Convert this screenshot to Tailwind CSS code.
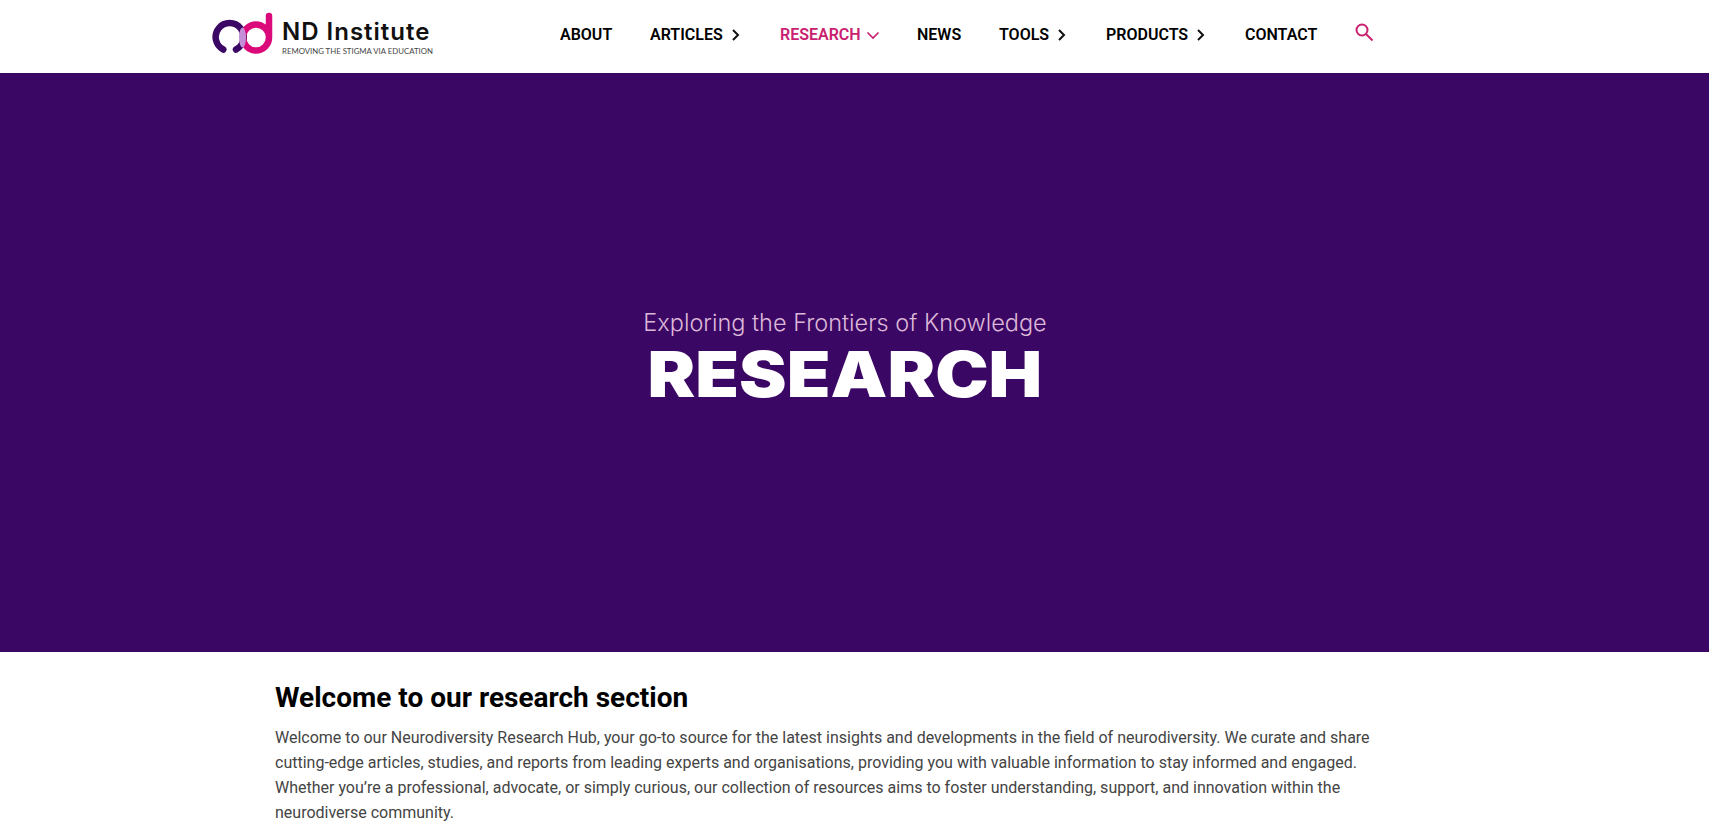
<!DOCTYPE html>
<html lang="en">
<head>
<meta charset="utf-8">
<script src="https://cdn.jsdelivr.net/npm/@tailwindcss/browser@4"></script>
<title>Research</title>
</head>
<body class="bg-white font-['Roboto',sans-serif] overflow-hidden h-[839px]">
<header class="h-[73px] bg-white flex items-center pl-[212px]">
  <a class="flex items-center w-[220px] shrink-0">
    <svg class="w-[62px] h-[50px] shrink-0 -mt-[7px]" viewBox="12 8 62 50" fill="none">
      <path d="M23.3 49.5 A14 14 0 1 1 36 49.5" stroke="#3b0764" stroke-width="6.5" stroke-linecap="round"/>
      <path d="M69 16 V37.5 A13 13 0 1 1 56 24.5 A13 13 0 0 1 69 37.5" stroke="#db0a7b" stroke-width="6.5" stroke-linecap="round"/>
      <ellipse cx="42.5" cy="37.5" rx="3.5" ry="10" fill="#c58fd8"/>
    </svg>
    <div class="ml-[8px] flex flex-col">
      <span class="font-['Inter',sans-serif] text-[24px] leading-[28px] font-semibold text-[#111] tracking-[1px] whitespace-nowrap">ND Institute</span>
      <span class="font-['Lato',sans-serif] text-[7.8px] leading-[10px] text-[#444] whitespace-nowrap">REMOVING THE STIGMA VIA EDUCATION</span>
    </div>
  </a>
  <nav class="flex items-center ml-[128px] -mt-[4px] text-[16px] font-semibold text-black leading-none">
    <a class="w-[90px]">ABOUT</a>
    <a class="flex items-center w-[130px]">ARTICLES
      <svg class="w-[12px] h-[14px] ml-[7px]" viewBox="0 0 12 14" fill="none" stroke="#111" stroke-width="2"><path d="M3 2l5 5-5 5"/></svg>
    </a>
    <a class="flex items-center w-[137px] text-[#c9216f]">RESEARCH
      <svg class="w-[14px] h-[10px] ml-[5px]" viewBox="0 0 14 10" fill="none" stroke="#c9216f" stroke-width="1.7"><path d="M1.5 2.5L7 8l5.5-5.5"/></svg>
    </a>
    <a class="w-[82px]">NEWS</a>
    <a class="flex items-center w-[107px]">TOOLS
      <svg class="w-[12px] h-[14px] ml-[7px]" viewBox="0 0 12 14" fill="none" stroke="#111" stroke-width="2"><path d="M3 2l5 5-5 5"/></svg>
    </a>
    <a class="flex items-center w-[139px]">PRODUCTS
      <svg class="w-[12px] h-[14px] ml-[7px]" viewBox="0 0 12 14" fill="none" stroke="#111" stroke-width="2"><path d="M3 2l5 5-5 5"/></svg>
    </a>
    <a class="w-[109px]">CONTACT</a>
    <svg class="w-[20px] h-[20px] -mt-[5px]" viewBox="0 0 20 20" fill="none" stroke="#c9216f" stroke-width="2"><circle cx="8" cy="8" r="5.5"/><path d="M12 12l6.5 6.5"/></svg>
  </nav>
</header>
<section class="h-[579px] bg-[#3b0764] flex flex-col items-center justify-center text-center pr-[19px]">
  <p class="font-['Inter',sans-serif] text-[23.5px] leading-[30px] font-light text-[#dcb8d8] -mt-[8px]">Exploring the Frontiers of Knowledge</p>
  <h1 class="font-['Inter',sans-serif] text-[63px] leading-[72px] font-black text-white scale-x-[1.135]">RESEARCH</h1>
</section>
<section class="pl-[275px] pr-[320px] pt-[27px]">
  <h2 class="text-[28px] leading-[38px] font-bold text-black">Welcome to our research section</h2>
  <p class="mt-[8px] text-[16px] leading-[25px] text-[#444]">Welcome to our Neurodiversity Research Hub, your go-to source for the latest insights and developments in the field of neurodiversity. We curate and share cutting-edge articles, studies, and reports from leading experts and organisations, providing you with valuable information to stay informed and engaged. Whether you’re a professional, advocate, or simply curious, our collection of resources aims to foster understanding, support, and innovation within the neurodiverse community.</p>
</section>
</body>
</html>
